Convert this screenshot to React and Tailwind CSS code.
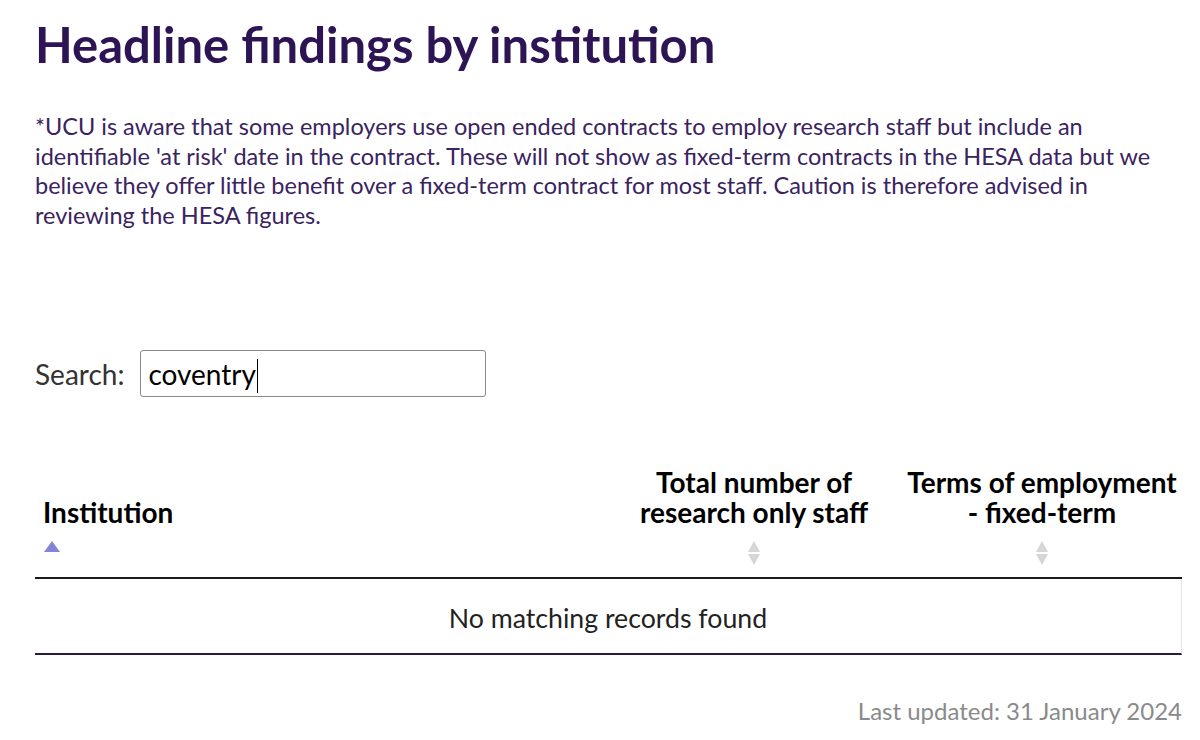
export default function App() {
  const font = { fontFamily: "Lato, 'Noto Sans', sans-serif" };
  const SortBoth = () => (
    <svg width="14" height="24" viewBox="0 0 14 24" className="mx-auto block">
      <path d="M7 0 L13 11 L1 11 Z" fill="#d6d6d6" />
      <path d="M7 24 L13 13 L1 13 Z" fill="#d6d6d6" />
    </svg>
  );
  return (
    <div className="w-[1200px] h-[740px] bg-white overflow-hidden pl-[35px] pr-[18px]" style={font}>
      <h1 className="text-[49px] leading-none font-bold text-[#2d1454] pt-[20px]">
        Headline findings by institution
      </h1>
      <p className="mt-[43px] text-[23.5px] leading-[29.7px] text-[#3a2360]">
        *UCU is aware that some employers use open ended contracts to employ research staff but include an
        identifiable 'at risk' date in the contract. These will not show as fixed-term contracts in the HESA data but we
        believe they offer little benefit over a fixed-term contract for most staff. Caution is therefore advised in
        reviewing the HESA figures.
      </p>
      <div className="mt-[119px] flex items-center h-[48px]">
        <span className="text-[28px] text-[#333333]">Search:</span>
        <div className="ml-[16px] w-[346px] h-[47px] border border-[#8a8a8a] rounded-[3px] flex items-center pl-[7px] text-[28px] text-black">
          <span>coventry</span>
          <span className="w-[1.5px] h-[34px] bg-black ml-[1px] mt-[4px]"></span>
        </div>
      </div>
      <div className="mt-[69px]">
        <div className="flex items-end border-b-2 border-[#1a1a1a] pb-[12px]">
          <div className="flex-1 pl-[8px] text-[28px] font-bold text-black">
            <div className="leading-[30px]">Institution</div>
            <div className="h-[24px] mt-[14px]">
              <svg width="16" height="11" viewBox="0 0 16 11" className="block ml-[1px]">
                <path d="M8 0 L16 11 L0 11 Z" fill="#8585d8" />
              </svg>
            </div>
          </div>
          <div className="w-[260px] text-center text-[28px] font-bold text-black leading-[30px]">
            <div>Total number of</div>
            <div>research only staff</div>
            <div className="mt-[14px]"><SortBoth /></div>
          </div>
          <div className="w-[280px] ml-[18px] text-center text-[28px] font-bold text-black leading-[30px]">
            <div>Terms of employment</div>
            <div>- fixed-term</div>
            <div className="mt-[14px]"><SortBoth /></div>
          </div>
        </div>
        <div className="border-b-2 border-[#2a1a3e] border-r border-r-[#e4e4e4] h-[76px] flex items-center justify-center pt-[4px] text-[26.7px] text-[#222222]">
          No matching records found
        </div>
      </div>
      <div className="mt-[41px] text-right text-[24px] leading-[30px] text-[#8a8a8a]">Last updated: 31 January 2024</div>
    </div>
  );
}
